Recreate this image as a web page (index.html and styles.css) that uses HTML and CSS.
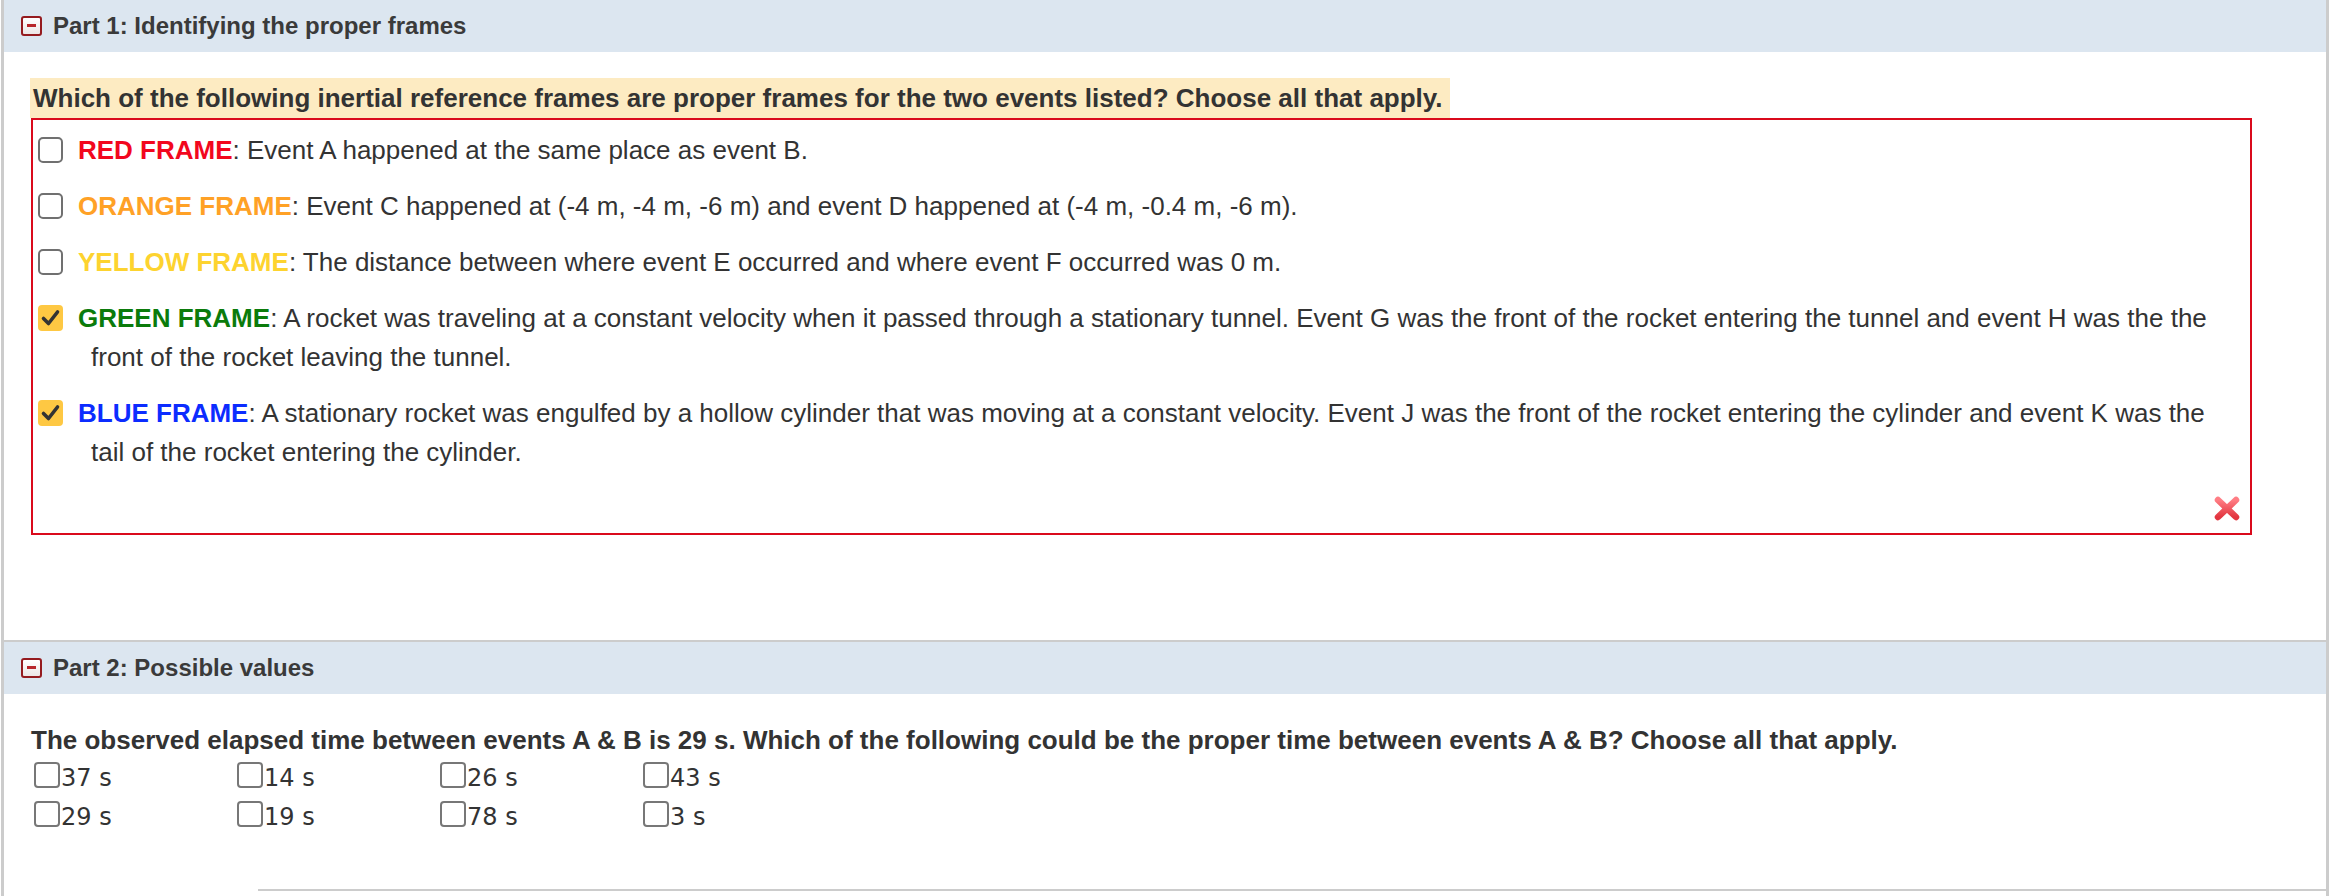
FILE: index.html
```html
<!DOCTYPE html>
<html>
<head>
<meta charset="utf-8">
<link rel="stylesheet" href="styles.css">
</head>
<body>
<div class="panel">
  <section class="part part-first">
    <div class="part-header">
      <span class="toggle"><span class="toggle-bar"></span></span>
      <span class="part-title">Part 1: Identifying the proper frames</span>
    </div>
    <div class="part-body part1-body">
      <div class="question-hl">Which of the following inertial reference frames are proper frames for the two events listed? Choose all that apply.</div>
      <div class="answer-box">
        <div class="item"><span class="cb"></span><b class="c-red">RED FRAME</b>: Event A happened at the same place as event B.</div>
        <div class="item"><span class="cb"></span><b class="c-orange">ORANGE FRAME</b>: Event C happened at (-4 m, -4 m, -6 m) and event D happened at (-4 m, -0.4 m, -6 m).</div>
        <div class="item"><span class="cb"></span><b class="c-yellow">YELLOW FRAME</b>: The distance between where event E occurred and where event F occurred was 0 m.</div>
        <div class="item"><span class="cb cb-on"><svg viewBox="0 0 25 26" width="25" height="26"><path d="M5.5 13.5 L10.5 18.5 L19.5 7" fill="none" stroke="#333" stroke-width="3.6" stroke-linecap="round" stroke-linejoin="round"/></svg></span><b class="c-green">GREEN FRAME</b>: A rocket was traveling at a constant velocity when it passed through a stationary tunnel. Event G was the front of the rocket entering the tunnel and event H was the the front of the rocket leaving the tunnel.</div>
        <div class="item"><span class="cb cb-on"><svg viewBox="0 0 25 26" width="25" height="26"><path d="M5.5 13.5 L10.5 18.5 L19.5 7" fill="none" stroke="#333" stroke-width="3.6" stroke-linecap="round" stroke-linejoin="round"/></svg></span><b class="c-blue">BLUE FRAME</b>: A stationary rocket was engulfed by a hollow cylinder that was moving at a constant velocity. Event J was the front of the rocket entering the cylinder and event K was the tail of the rocket entering the cylinder.</div>
        <div class="feedback">
          <svg class="wrong" viewBox="0 0 28 27" width="28" height="27">
            <defs>
              <linearGradient id="xg" x1="0" y1="0" x2="0" y2="1">
                <stop offset="0" stop-color="#ff7d84"/>
                <stop offset="1" stop-color="#e2353f"/>
              </linearGradient>
            </defs>
            <path d="M5 5 L23 22 M23 5 L5 22" fill="none" stroke="url(#xg)" stroke-width="6.5" stroke-linecap="round"/>
          </svg>
        </div>
      </div>
    </div>
  </section>
  <section class="part part-second">
    <div class="part-header">
      <span class="toggle"><span class="toggle-bar"></span></span>
      <span class="part-title">Part 2: Possible values</span>
    </div>
    <div class="part-body part2-body">
      <div class="question">The observed elapsed time between events A &amp; B is 29 s. Which of the following could be the proper time between events A &amp; B? Choose all that apply.</div>
      <div class="options">
        <label class="opt"><span class="ocb"></span>37 s</label>
        <label class="opt"><span class="ocb"></span>14 s</label>
        <label class="opt"><span class="ocb"></span>26 s</label>
        <label class="opt"><span class="ocb"></span>43 s</label>
        <label class="opt"><span class="ocb"></span>29 s</label>
        <label class="opt"><span class="ocb"></span>19 s</label>
        <label class="opt"><span class="ocb"></span>78 s</label>
        <label class="opt"><span class="ocb"></span>3 s</label>
      </div>
      <div class="bottom-rule"></div>
    </div>
  </section>
</div>
</body>
</html>
```

FILE: styles.css
```css
html, body {
  margin: 0;
  padding: 0;
  background: #ffffff;
}
body {
  font-family: "Liberation Sans", Arial, sans-serif;
  color: #333333;
  overflow: hidden;
}
.panel {
  margin-left: 1px;
  width: 2322px;
  border-left: 3px solid #cccccc;
  border-right: 3px solid #cccccc;
  height: 896px;
}
.part-header {
  height: 52px;
  background: #dce6f0;
  display: flex;
  align-items: center;
  padding-left: 17px;
}
.part-second {
  border-top: 2px solid #cccccc;
}
.toggle {
  width: 21px;
  height: 20px;
  box-sizing: border-box;
  border: 2px solid #951b1f;
  border-radius: 3px;
  background: linear-gradient(#ffffff, #ece6e6);
  display: flex;
  align-items: center;
  justify-content: center;
  margin-right: 11px;
  margin-top: -1px;
}
.toggle-bar {
  width: 9px;
  height: 3px;
  background: #b8262b;
}
.part-title {
  font-weight: bold;
  font-size: 24px;
  color: #3a3a3a;
  line-height: 30px;
}
.part1-body {
  padding: 26px 0 105px 26px;
}
.question-hl {
  display: inline-block;
  background: #fdebc2;
  font-weight: bold;
  font-size: 26px;
  line-height: 40px;
  height: 40px;
  padding: 0 7px 0 3px;
  color: #333333;
}
.answer-box {
  margin-left: 1px;
  width: 2217px;
  border: 2px solid #da0a1c;
  padding-top: 11px;
  padding-bottom: 12px;
  font-size: 26px;
}
.item {
  line-height: 39px;
  padding-left: 58px;
  text-indent: -53px;
  padding-right: 20px;
  margin-bottom: 17px;
}
.item b {
  font-weight: bold;
}
.cb {
  display: inline-block;
  box-sizing: border-box;
  width: 25px;
  height: 26px;
  border: 2px solid #707070;
  border-radius: 5px;
  background: #ffffff;
  vertical-align: top;
  margin-top: 6px;
  margin-right: 15px;
  text-indent: 0;
}
.cb-on {
  border: none;
  background: #fec843;
  border-radius: 4px;
}
.cb-on svg {
  display: block;
}
.c-red { color: #f2071e; }
.c-orange { color: #ffa126; }
.c-yellow { color: #fdd32f; }
.c-green { color: #0b7b0b; }
.c-blue { color: #0c2cff; }
.feedback {
  display: flex;
  justify-content: flex-end;
  padding-right: 9px;
  margin-top: 23px;
  height: 26px;
}
.wrong {
  display: block;
}
.part2-body {
  padding: 28px 0 0 27px;
}
.question {
  font-weight: bold;
  font-size: 26px;
  line-height: 36px;
  margin-bottom: 1px;
  color: #333333;
}
.options {
  margin-left: 3px;
  display: grid;
  grid-template-columns: repeat(4, 203px);
}
.opt {
  font-family: "DejaVu Sans", Verdana, sans-serif;
  font-size: 24px;
  line-height: 39px;
  color: #333333;
  white-space: nowrap;
}
.ocb {
  display: inline-block;
  box-sizing: border-box;
  width: 26px;
  height: 26px;
  border: 2px solid #777777;
  border-radius: 4px;
  vertical-align: top;
  margin-top: 3px;
  margin-right: 1px;
}
.bottom-rule {
  margin-top: 52px;
  margin-left: 227px;
  border-top: 2px solid #cccccc;
}
```
